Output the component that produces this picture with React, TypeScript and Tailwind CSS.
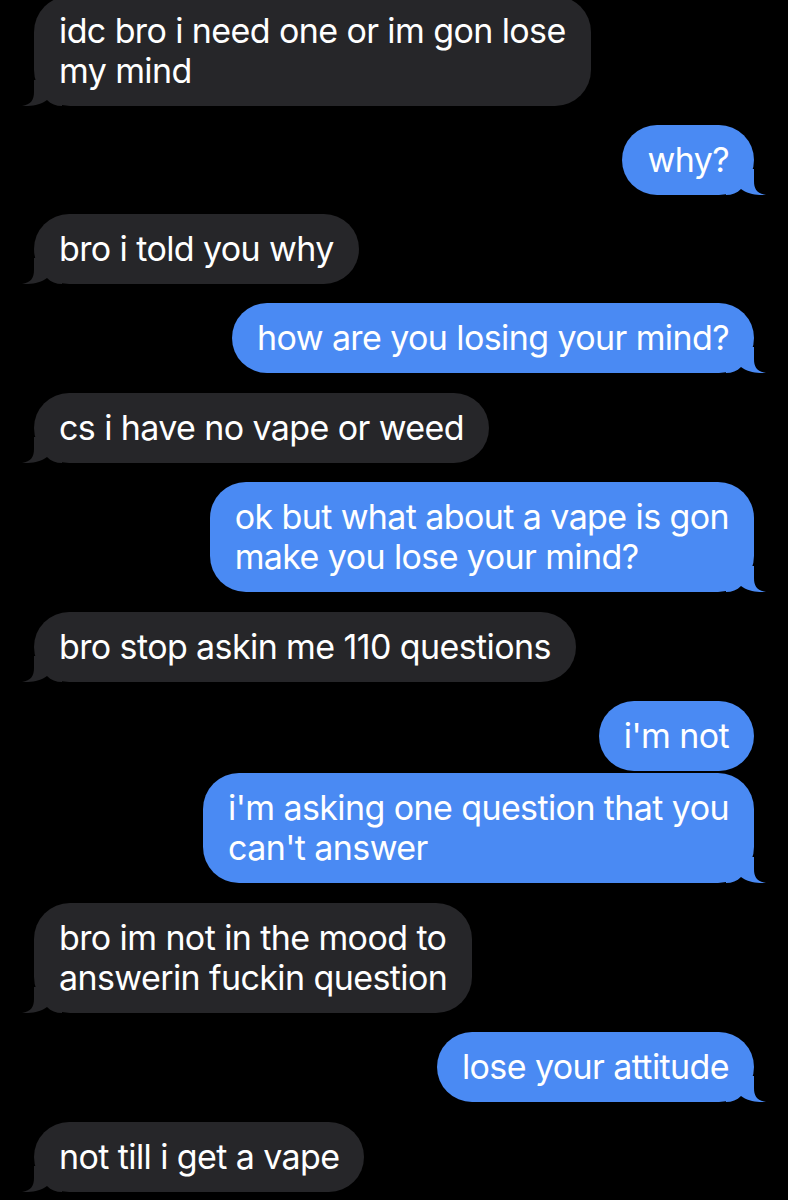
import React from 'react'

type Msg = {
  from: 'me' | 'them'
  lines: string[]
  gap: string
  tail?: boolean
}

const messages: Msg[] = [
  { from: 'them', lines: ['idc bro i need one or im gon lose', 'my mind'], gap: '-mt-[4px]' },
  { from: 'me', lines: ['why?'], gap: 'mt-[19px]' },
  { from: 'them', lines: ['bro i told you why'], gap: 'mt-[19px]' },
  { from: 'me', lines: ['how are you losing your mind?'], gap: 'mt-[19px]' },
  { from: 'them', lines: ['cs i have no vape or weed'], gap: 'mt-[20px]' },
  { from: 'me', lines: ['ok but what about a vape is gon', 'make you lose your mind?'], gap: 'mt-[19px]' },
  { from: 'them', lines: ['bro stop askin me 110 questions'], gap: 'mt-[20px]' },
  { from: 'me', lines: ["i'm not"], gap: 'mt-[19px]', tail: false },
  { from: 'me', lines: ["i'm asking one question that you", "can't answer"], gap: 'mt-[2px]' },
  { from: 'them', lines: ['bro im not in the mood to', 'answerin fuckin question'], gap: 'mt-[20px]' },
  { from: 'me', lines: ['lose your attitude'], gap: 'mt-[19px]' },
  { from: 'them', lines: ['not till i get a vape'], gap: 'mt-[20px]' },
]

// bubble tail, drawn for the right side; mirrored for incoming messages
function Tail({ color, left }: { color: string; left?: boolean }) {
  return (
    <svg
      width="40"
      height="26"
      viewBox="0 0 40 26"
      className={
        left
          ? 'absolute bottom-0 -left-[12px] -scale-x-100'
          : 'absolute bottom-0 -right-[12px]'
      }
    >
      <path
        d="M28 0 L28 12 C28 20 31 24.5 40 26 C32 26.5 21 25 15 20 C11 24 6 26 0 26 L0 0 Z"
        fill={color}
      />
    </svg>
  )
}

function Bubble({ msg }: { msg: Msg }) {
  const mine = msg.from === 'me'
  const color = mine ? '#4a8af3' : '#262629'
  const showTail = msg.tail !== false

  return (
    <div className={`flex ${mine ? 'justify-end pr-[34px]' : 'justify-start pl-[34px]'} ${msg.gap}`}>
      <div
        className={`relative rounded-[36px] px-[25px] py-[15px] text-white text-[34px] leading-[40px] whitespace-nowrap tracking-[-0.6px] ${
          mine ? 'bg-[#4a8af3]' : 'bg-[#262629]'
        }`}
      >
        {showTail && <Tail color={color} left={!mine} />}
        <div className="relative">
          {msg.lines.map((l, i) => (
            <div key={i}>{l}</div>
          ))}
        </div>
      </div>
    </div>
  )
}

export default function App() {
  return (
    <div
      className="w-[788px] h-[1200px] overflow-hidden bg-black"
      style={{ fontFamily: 'Inter, "Liberation Sans", sans-serif' }}
    >
      {messages.map((m, i) => (
        <Bubble key={i} msg={m} />
      ))}
    </div>
  )
}
